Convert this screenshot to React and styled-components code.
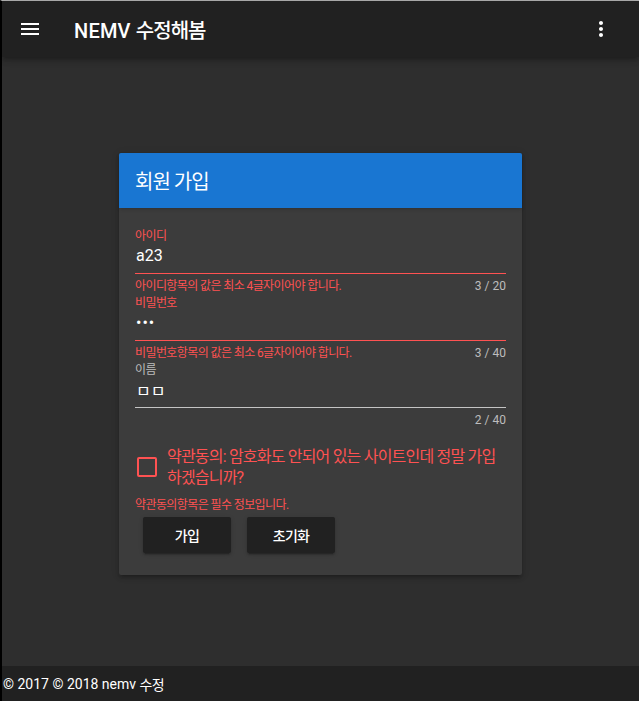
import React from 'react';
import styled, { createGlobalStyle } from 'styled-components';

const GlobalStyle = createGlobalStyle`
    html, body {
        margin: 0;
        padding: 0;
        background: #000;
    }
    body {
        font-family: Roboto, "Noto Sans CJK KR", sans-serif;
        color: #fff;
    }
`;

const Frame = styled.div`
    height: 100vh;
    box-sizing: border-box;
    border-top: 1px solid #b4b4b4;
    border-left: 2px solid #000;
    background: #2e2e2e;
    display: flex;
    flex-direction: column;
`;

const Toolbar = styled.header`
    height: 56px;
    flex: 0 0 56px;
    background: #212121;
    display: flex;
    align-items: center;
    padding: 0 14px 0 4px;
    box-shadow: 0 2px 4px -1px rgba(0,0,0,.2), 0 4px 5px 0 rgba(0,0,0,.14), 0 1px 10px 0 rgba(0,0,0,.12);
    position: relative;
    z-index: 2;
`;

const IconButton = styled.button`
    width: 48px;
    height: 48px;
    border: 0;
    padding: 0;
    background: transparent;
    display: flex;
    align-items: center;
    justify-content: center;
    color: #fff;
    svg { width: 24px; height: 24px; fill: currentColor; }
`;

const Title = styled.h1`
    margin: 0 0 0 20px;
    font-size: 20px;
    font-weight: 500;
    letter-spacing: 0.2px;
    flex: 1;
    span { letter-spacing: -0.05em; }
`;

const Main = styled.main`
    flex: 1;
    display: flex;
    align-items: center;
    justify-content: center;
`;

const Card = styled.section`
    width: 403px;
    background: #3c3c3c;
    border-radius: 2px;
    box-shadow: 0 3px 3px -2px rgba(0,0,0,.2), 0 3px 4px 0 rgba(0,0,0,.14), 0 1px 8px 0 rgba(0,0,0,.12);
    margin-top: 5px;
`;

const CardHeader = styled.div`
    height: 55px;
    background: #1976d2;
    border-radius: 2px 2px 0 0;
    display: flex;
    align-items: center;
    padding: 0 16px;
    font-size: 20px;
    letter-spacing: -0.05em;
    box-shadow: 0 2px 4px -1px rgba(0,0,0,.2);
`;

const CardBody = styled.form`
    padding: 20px 16px 22px;
`;

const Field = styled.div`
    margin-bottom: 2px;
`;

const Label = styled.label`
    display: block;
    height: 16px;
    line-height: 16px;
    font-size: 12px;
    letter-spacing: -0.05em;
    color: ${p => (p.$error ? '#ff5252' : '#bdbdbd')};
`;

const Input = styled.input`
    display: block;
    width: 100%;
    box-sizing: border-box;
    height: 30px;
    margin: 0;
    padding: 0 0 6px 1px;
    background: transparent;
    border: 0;
    border-bottom: 1px solid ${p => (p.$error ? '#ff5252' : '#c4c4c4')};
    outline: none;
    color: #fff;
    font-family: Roboto, "Noto Sans CJK KR", sans-serif;
    font-size: 16px;
    letter-spacing: ${p => (p.type === 'password' ? '1px' : '0')};
`;

const Messages = styled.div`
    display: flex;
    justify-content: space-between;
    margin-top: 5px;
    height: 14px;
    line-height: 14px;
    font-size: 12px;
`;

const ErrorText = styled.span`
    color: #ff5252;
    letter-spacing: -0.05em;
`;

const Counter = styled.span`
    color: #bdbdbd;
`;

const CheckRow = styled.label`
    display: flex;
    align-items: center;
    margin-top: 19px;
    color: #ff5252;
`;

const CheckSlot = styled.span`
    flex: 0 0 24px;
    height: 24px;
    display: flex;
    align-items: center;
    justify-content: center;
    margin-right: 8px;
    &::before {
        content: '';
        width: 16px;
        height: 16px;
        border: 2px solid #ff5252;
        border-radius: 2px;
    }
`;

const CheckText = styled.span`
    font-size: 16px;
    line-height: 21px;
    letter-spacing: -0.05em;
`;

const CheckError = styled.div`
    margin-top: 10px;
    font-size: 12px;
    line-height: 14px;
    color: #ff5252;
    letter-spacing: -0.05em;
`;

const Actions = styled.div`
    display: flex;
    margin-top: 5px;
`;

const Button = styled.button`
    width: 88px;
    height: 36px;
    margin: 0 8px;
    border: 0;
    border-radius: 2px;
    background: #212121;
    color: #fff;
    font-family: Roboto, "Noto Sans CJK KR", sans-serif;
    font-size: 14px;
    font-weight: 500;
    letter-spacing: -0.05em;
    box-shadow: 0 3px 1px -2px rgba(0,0,0,.2), 0 2px 2px 0 rgba(0,0,0,.14), 0 1px 5px 0 rgba(0,0,0,.12);
`;

const Footer = styled.footer`
    height: 35px;
    flex: 0 0 35px;
    background: #212121;
    display: flex;
    align-items: center;
    padding-left: 1px;
    font-size: 14px;
    white-space: pre;
    span { letter-spacing: -0.05em; }
`;

function TextField({ label, value, error, counter, type = 'text' }) {
    return (
        <Field>
            <Label $error={!!error}>{label}</Label>
            <Input type={type} value={value} readOnly $error={!!error} />
            <Messages>
                <ErrorText>{error}</ErrorText>
                <Counter>{counter}</Counter>
            </Messages>
        </Field>
    );
}

export default function App() {
    return (
        <>
            <GlobalStyle />
            <Frame>
                <Toolbar>
                    <IconButton aria-label="menu">
                        <svg viewBox="0 0 24 24"><path d="M3 18h18v-2H3v2zm0-5h18v-2H3v2zm0-7v2h18V6H3z" /></svg>
                    </IconButton>
                    <Title>NEMV <span>수정해봄</span></Title>
                    <IconButton aria-label="more">
                        <svg viewBox="0 0 24 24"><path d="M12 8c1.1 0 2-.9 2-2s-.9-2-2-2-2 .9-2 2 .9 2 2 2zm0 2c-1.1 0-2 .9-2 2s.9 2 2 2 2-.9 2-2-.9-2-2-2zm0 6c-1.1 0-2 .9-2 2s.9 2 2 2 2-.9 2-2-.9-2-2-2z" /></svg>
                    </IconButton>
                </Toolbar>
                <Main>
                    <Card>
                        <CardHeader>회원 가입</CardHeader>
                        <CardBody onSubmit={e => e.preventDefault()}>
                            <TextField label="아이디" value="a23" error="아이디항목의 값은 최소 4글자이어야 합니다." counter="3 / 20" />
                            <TextField label="비밀번호" type="password" value="abc" error="비밀번호항목의 값은 최소 6글자이어야 합니다." counter="3 / 40" />
                            <TextField label="이름" value="ㅁㅁ" counter="2 / 40" />
                            <CheckRow>
                                <CheckSlot />
                                <CheckText>약관동의: 암호화도 안되어 있는 사이트인데 정말 가입 하겠습니까?</CheckText>
                            </CheckRow>
                            <CheckError>약관동의항목은 필수 정보입니다.</CheckError>
                            <Actions>
                                <Button type="submit">가입</Button>
                                <Button type="reset">초기화</Button>
                            </Actions>
                        </CardBody>
                    </Card>
                </Main>
                <Footer>© 2017 © 2018 nemv <span>수정</span></Footer>
            </Frame>
        </>
    );
}
